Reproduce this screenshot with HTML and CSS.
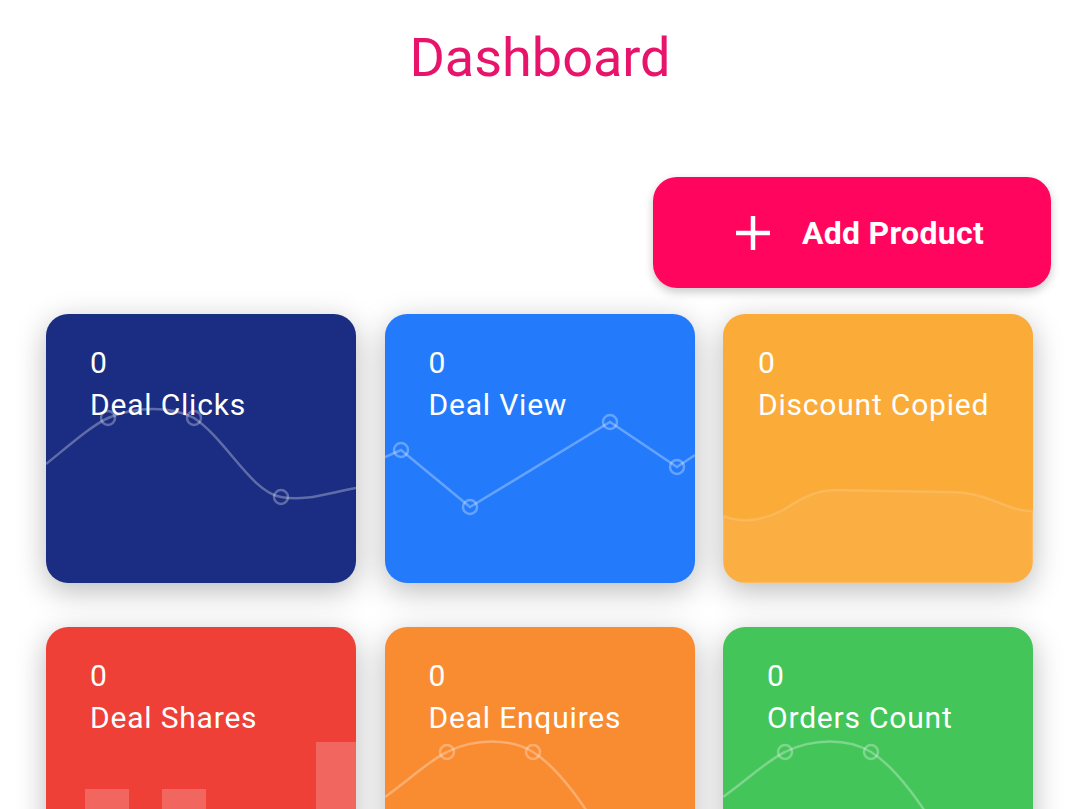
FILE: index.html
```html
<!DOCTYPE html>
<html lang="en">
<head>
<meta charset="utf-8">
<title>Dashboard</title>
<link rel="stylesheet" href="styles.css">
</head>
<body>
<header class="page-header">
  <h1 class="page-title">Dashboard</h1>
</header>
<div class="toolbar">
  <button class="add-btn" type="button">
    <svg class="add-icon" viewBox="0 0 38 38" aria-hidden="true"><path d="M19 2v34M2 19h34" stroke="#fff" stroke-width="4.5" fill="none"/></svg>
    <span>Add Product</span>
  </button>
</div>
<main class="cards">
  <section class="card card--navy">
    <svg class="card-chart" viewBox="0 0 310 269" preserveAspectRatio="none" aria-hidden="true">
      <path class="chart-line" d="M0,150 C25,130 45,112 62,104 C90,92 125,92 148,104 C180,125 205,178 235,183 C260,188 285,178 310,174"/>
      <circle class="chart-dot" cx="62" cy="104" r="7"/>
      <circle class="chart-dot" cx="148" cy="104" r="7"/>
      <circle class="chart-dot" cx="235" cy="183" r="7"/>
    </svg>
    <div class="card-value">0</div>
    <div class="card-label">Deal Clicks</div>
  </section>
  <section class="card card--blue">
    <svg class="card-chart" viewBox="0 0 310 269" preserveAspectRatio="none" aria-hidden="true">
      <polyline class="chart-line" points="0,143 16,136 85,193 225,108 292,153 310,141"/>
      <circle class="chart-dot" cx="16" cy="136" r="7"/>
      <circle class="chart-dot" cx="85" cy="193" r="7"/>
      <circle class="chart-dot" cx="225" cy="108" r="7"/>
      <circle class="chart-dot" cx="292" cy="153" r="7"/>
    </svg>
    <div class="card-value">0</div>
    <div class="card-label">Deal View</div>
  </section>
  <section class="card card--amber card--tight">
    <svg class="card-chart" viewBox="0 0 310 269" preserveAspectRatio="none" aria-hidden="true">
      <path class="chart-area" d="M0,202 C20,210 40,206 60,196 C80,183 92,176 115,176 L230,178 C252,178 268,186 288,193 C298,197 304,197 310,197 L310,269 L0,269 Z"/>
    </svg>
    <div class="card-value">0</div>
    <div class="card-label">Discount Copied</div>
  </section>
  <section class="card card--red">
    <svg class="card-chart" viewBox="0 0 310 269" preserveAspectRatio="none" aria-hidden="true">
      <rect class="chart-bar" x="39" y="162" width="44" height="107"/>
      <rect class="chart-bar" x="116" y="162" width="44" height="107"/>
      <rect class="chart-bar" x="270" y="115" width="40" height="154"/>
    </svg>
    <div class="card-value">0</div>
    <div class="card-label">Deal Shares</div>
  </section>
  <section class="card card--orange">
    <svg class="card-chart" viewBox="0 0 310 269" preserveAspectRatio="none" aria-hidden="true">
      <path class="chart-line" d="M0,170 C25,152 45,133 62,125 C90,111 125,111 148,125 C175,142 200,180 222,215 C245,250 280,262 310,262"/>
      <circle class="chart-dot" cx="62" cy="125" r="7"/>
      <circle class="chart-dot" cx="148" cy="125" r="7"/>
    </svg>
    <div class="card-value">0</div>
    <div class="card-label">Deal Enquires</div>
  </section>
  <section class="card card--green">
    <svg class="card-chart" viewBox="0 0 310 269" preserveAspectRatio="none" aria-hidden="true">
      <path class="chart-line" d="M0,170 C25,152 45,133 62,125 C90,111 125,111 148,125 C175,142 200,180 222,215 C245,250 280,262 310,262"/>
      <circle class="chart-dot" cx="62" cy="125" r="7"/>
      <circle class="chart-dot" cx="148" cy="125" r="7"/>
    </svg>
    <div class="card-value">0</div>
    <div class="card-label">Orders Count</div>
  </section>
</main>
</body>
</html>
```
FILE: styles.css
```css
* { box-sizing: border-box; }

html, body {
  margin: 0;
  padding: 0;
  background: #ffffff;
  font-family: Roboto, "Noto Sans", "Liberation Sans", sans-serif;
  overflow: hidden;
}

.page-header {
  display: flex;
  justify-content: center;
  padding-top: 27px;
}

.page-title {
  margin: 0;
  font-size: 54px;
  line-height: 62px;
  font-weight: 400;
  color: #e8136b;
}

.toolbar {
  display: flex;
  justify-content: flex-end;
  padding: 88px 29px 0 0;
}

.add-btn {
  display: flex;
  align-items: center;
  justify-content: center;
  gap: 30px;
  width: 398px;
  height: 111px;
  padding: 0 0 0 14px;
  border: none;
  border-radius: 24px;
  background: #ff055e;
  color: #ffffff;
  font-family: inherit;
  font-size: 32px;
  font-weight: 700;
  letter-spacing: 0.3px;
  box-shadow: 0 4px 10px rgba(0, 0, 0, 0.22);
}

.add-icon {
  width: 38px;
  height: 38px;
  flex: none;
}

.cards {
  display: grid;
  grid-template-columns: repeat(3, 1fr);
  column-gap: 28.5px;
  row-gap: 44px;
  padding: 26px 47px 0 46px;
}

.card {
  position: relative;
  height: 269px;
  padding: 28px 0 0 44px;
  border-radius: 22px;
  overflow: hidden;
  color: #ffffff;
  box-shadow: 0 8px 30px rgba(0, 0, 0, 0.27);
}

.card--tight { padding-left: 35px; }

.card--navy { background: #1b2d82; }
.card--blue { background: #237bfc; }
.card--amber { background: #fbab38; }
.card--red { background: #ee4036; }
.card--orange { background: #f98c31; }
.card--green { background: #44c55a; }

.card-chart {
  position: absolute;
  inset: 0;
  width: 100%;
  height: 100%;
}

.chart-line {
  fill: none;
  stroke: rgba(255, 255, 255, 0.3);
  stroke-width: 2.5;
}

.chart-dot {
  fill: none;
  stroke: rgba(255, 255, 255, 0.3);
  stroke-width: 2.5;
}

.chart-area {
  fill: rgba(255, 255, 255, 0.05);
  stroke: rgba(255, 255, 255, 0.15);
  stroke-width: 2.5;
}

.chart-bar {
  fill: rgba(255, 255, 255, 0.2);
}

.card-value,
.card-label {
  position: relative;
  font-size: 30px;
  line-height: 42px;
  letter-spacing: 0.8px;
  white-space: nowrap;
}
```
